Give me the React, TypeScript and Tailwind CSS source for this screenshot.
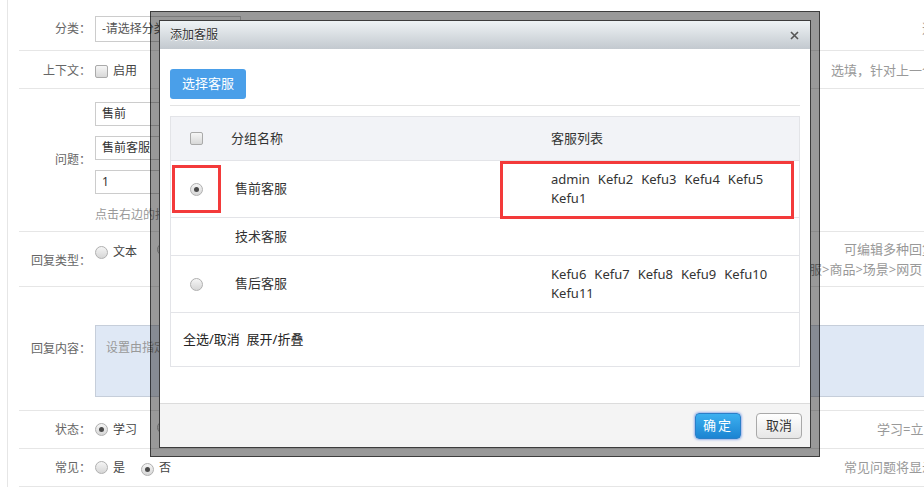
import React from 'react';

function Radio({ checked = false }: { checked?: boolean }) {
  return (
    <span className="inline-flex h-[13px] w-[13px] shrink-0 items-center justify-center rounded-full border border-[#b0b0b0] bg-gradient-to-b from-[#f5f5f5] to-[#d6d6d6]">
      {checked && <span className="h-[5px] w-[5px] rounded-full bg-[#4a4a4a]" />}
    </span>
  );
}

function Checkbox() {
  return (
    <span className="inline-block h-[13px] w-[13px] shrink-0 rounded-[2px] border border-[#aaaaaa] bg-gradient-to-b from-[#f6f6f6] to-[#d8d8d8]" />
  );
}

function FormRow({
  label,
  height,
  children,
  tip,
  contentClass = '',
}: {
  label: string;
  height: string;
  children?: React.ReactNode;
  tip?: React.ReactNode;
  contentClass?: string;
}) {
  return (
    <div className={`flex items-center border-b border-[#e6e6e6] ${height}`}>
      <div className="w-[76px] shrink-0 pr-[4px] text-right text-[12px] text-[#666]">{label}</div>
      <div className={`w-[696px] shrink-0 ${contentClass}`}>{children}</div>
      <div className="flex-1 whitespace-nowrap text-[13px] text-[#999]">{tip}</div>
    </div>
  );
}

const groups = [
  { name: '售前客服', radio: true, checked: true, list: ['admin', 'Kefu2', 'Kefu3', 'Kefu4', 'Kefu5', 'Kefu1'], h: 'h-[57px]' },
  { name: '技术客服', radio: false, checked: false, list: [], h: 'h-[38px]' },
  { name: '售后客服', radio: true, checked: false, list: ['Kefu6', 'Kefu7', 'Kefu8', 'Kefu9', 'Kefu10', 'Kefu11'], h: 'h-[57px]' },
];

export default function App() {
  return (
    <div className="relative h-[487px] w-[924px] overflow-hidden bg-white font-['Noto_Sans','Noto_Sans_CJK_SC',sans-serif] text-[#333]">
      {/* page behind the dialog */}
      <div className="ml-[7px] h-full w-[1100px] border-l border-[#e6e6e6] pl-[11px]">
        <FormRow
          label="分类："
          height="h-[51px] pt-[8px]"
          tip={<span className="pl-[131px]">选填</span>}
        >
          <div className="flex h-[26px] w-[146px] items-center border border-[#cccccc] bg-white pl-[6px] text-[12px] text-[#555]">
            -请选择分类-
          </div>
        </FormRow>

        <FormRow
          label="上下文："
          height="h-[38px] pt-[3px]"
          tip={<span className="pl-[40px]">选填，针对上一个问题</span>}
        >
          <label className="flex items-center gap-[5px] text-[12px] text-[#444]">
            <Checkbox />
            启用
          </label>
        </FormRow>

        <FormRow label="问题：" height="h-[143px]" contentClass="self-start pt-[13px]">
          <div className="flex flex-col gap-[10px]">
            <div className="flex h-[24px] w-[240px] items-center border border-[#cccccc] pl-[6px] text-[12px]">售前</div>
            <div className="flex h-[24px] w-[240px] items-center border border-[#cccccc] pl-[6px] text-[12px]">售前客服</div>
            <div className="flex h-[24px] w-[240px] items-center border border-[#cccccc] pl-[6px] text-[12px]">1</div>
          </div>
          <div className="mt-[11px] text-[12px] leading-[20px] text-[#999]">点击右边的按钮选择客服分组</div>
        </FormRow>

        <FormRow
          label="回复类型："
          height="h-[55px] pt-[4px]"
          contentClass="self-start pt-[8px]"
          tip={
            <div className="-mt-[4px] leading-[20px]">
              <div className="pl-[53px]">可编辑多种回复类型</div>
              <div className="pl-[5px]">客服&gt;商品&gt;场景&gt;网页</div>
            </div>
          }
        >
          <div className="flex h-[16px] items-center text-[12px] text-[#444]">
            <Radio />
            <span className="ml-[5px]">文本</span>
            <span className="ml-[20px]"><Radio /></span>
            <span className="ml-[5px]">图文</span>
          </div>
        </FormRow>

        <FormRow label="回复内容：" height="h-[124px]" contentClass="self-start pt-[38px]">
          <div className="h-[72px] w-[900px] border border-[#c6ceda] bg-[#dfe8f5] pl-[10px] pt-[13px] text-[12px] text-[#999]">
            设置由指定客服分组进行回复
          </div>
        </FormRow>

        <FormRow
          label="状态："
          height="h-[38px]"
          tip={<span className="pl-[86px]">学习=立即生效</span>}
        >
          <div className="flex items-center text-[12px] text-[#444]">
            <Radio checked />
            <span className="ml-[5px]">学习</span>
            <span className="ml-[20px]"><Radio /></span>
            <span className="ml-[5px]">停用</span>
          </div>
        </FormRow>

        <FormRow
          label="常见："
          height="h-[38px]"
          tip={<span className="pl-[53px]">常见问题将显示在列表</span>}
        >
          <div className="flex items-center text-[12px] text-[#444]">
            <Radio />
            <span className="ml-[5px]">是</span>
            <span className="ml-[16px]"><Radio checked /></span>
            <span className="ml-[5px]">否</span>
          </div>
        </FormRow>
      </div>

      {/* dialog */}
      <div className="absolute left-[150px] top-[11px] h-[446px] w-[670px] border border-black/60 bg-black/40 p-[8px]">
        <div className="flex h-full flex-col border border-[#3c3c3c] bg-white">
          <div className="flex h-[28px] shrink-0 items-center justify-between bg-gradient-to-b from-[#eef3f5] to-[#c3c9cf] pl-[10px] pr-[11px]">
            <span className="text-[12px] text-[#333] [text-shadow:0_1px_0_#fff]">添加客服</span>
            <svg width="9" height="9" viewBox="0 0 9 9">
              <path d="M1 1 L8 8 M8 1 L1 8" stroke="#555" strokeWidth="1.6" />
            </svg>
          </div>

          <div className="flex-1 px-[10px] pt-[20px]">
            <button className="h-[30px] w-[76px] rounded-[3px] bg-[#4a9fe9] text-[13px] text-white">选择客服</button>
            <div className="mt-[6px] border-t border-[#e3e3e3]" />

            <div className="mt-[10px] border border-[#e3e4e8] text-[13px] text-[#333]">
              <div className="grid h-[44px] grid-cols-[51px_329px_1fr] items-center border-b border-[#e3e4e8] bg-[#f2f3f7]">
                <div className="flex justify-center"><Checkbox /></div>
                <div className="pl-[9px]">分组名称</div>
                <div>客服列表</div>
              </div>

              {groups.map((g) => (
                <div
                  key={g.name}
                  className={`grid grid-cols-[51px_329px_1fr] items-center border-b border-[#e3e4e8] ${g.h}`}
                >
                  <div className="flex justify-center">{g.radio && <Radio checked={g.checked} />}</div>
                  <div className="pl-[13px]">{g.name}</div>
                  <div className="w-[230px] leading-[19px]">
                    {g.list.map((k) => (
                      <span key={k} className="mr-[8px] inline-block">{k}</span>
                    ))}
                  </div>
                </div>
              ))}

              <div className="flex h-[53px] items-center whitespace-pre pl-[12px] text-[#222]">
                {'全选/取消  展开/折叠'}
              </div>
            </div>
          </div>

          <div className="flex h-[44px] shrink-0 items-center justify-end gap-[15px] border-t border-[#dcdcdc] bg-[#f4f4f4] pr-[8px]">
            <button className="h-[26px] w-[46px] rounded-[4px] border border-[#2b7fc8] bg-gradient-to-b from-[#3cb0f0] to-[#1c84d2] text-[13px] tracking-[2px] text-white shadow-[0_0_3px_#3b6fe0]">
              确定
            </button>
            <button className="h-[26px] w-[46px] rounded-[4px] border border-[#a9a9a9] bg-gradient-to-b from-[#ffffff] to-[#e6e6e6] text-[13px] text-[#333]">
              取消
            </button>
          </div>
        </div>
      </div>

      {/* red annotation boxes */}
      <div className="absolute left-[172px] top-[165px] h-[48px] w-[49px] border-[3px] border-[#f33a3a]" />
      <div className="absolute left-[500px] top-[161px] h-[58px] w-[294px] border-[3px] border-[#f33a3a]" />
    </div>
  );
}
